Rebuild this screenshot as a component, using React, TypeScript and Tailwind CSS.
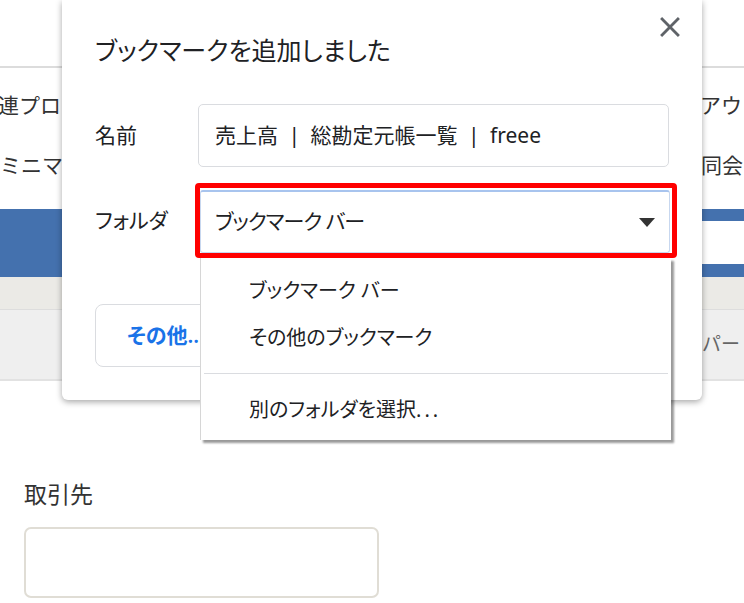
import { FC } from "react";

const CloseIcon: FC = () => (
  <svg width="34" height="34" viewBox="0 0 24 24" fill="#5f6368">
    <path d="M19 6.41L17.59 5 12 10.59 6.41 5 5 6.41 10.59 12 5 17.59 6.41 19 12 13.41 17.59 19 19 17.59 13.41 12z" />
  </svg>
);

const Caret: FC = () => (
  <svg width="16" height="9" viewBox="0 0 16 9">
    <path d="M0 0 L16 0 L8 9 Z" fill="#333333" />
  </svg>
);

const BackgroundPage: FC = () => (
  <div className="flex flex-col text-[#333] text-[21px]">
    <div className="h-[68px] border-b-2 border-[#dcdcdc]" />
    <div className="h-[76px] flex items-center">
      <div className="flex-1 whitespace-nowrap -ml-[23px]">関連プロジェクト</div>
      <div className="w-[44px] shrink-0 whitespace-nowrap -ml-[2px]">アウト</div>
    </div>
    <div className="h-[44px] flex items-center">
      <div className="flex-1 whitespace-nowrap">ミニマム</div>
      <div className="w-[64px] shrink-0 whitespace-nowrap">合同会</div>
    </div>
    <div className="h-[21px]" />
    <div className="h-[68px] bg-[#4471ae] flex items-start justify-end">
      <div className="mt-[12px] h-[43px] w-[120px] bg-white" />
    </div>
    <div className="h-[33px] bg-[#ebeae6] border-b border-[#dddddd]" />
    <div className="h-[71px] bg-[#efefef] border-b-2 border-[#e2e2e2] flex items-center justify-end">
      <div className="flex items-center gap-[6px] h-[34px] w-[42px] text-[19px] text-[#666] whitespace-nowrap">
        <span>パー</span>
        <span className="h-[30px] w-[6px] border-l-2 border-[#e7c89a] bg-[#fbf3e6]" />
      </div>
    </div>
    <div className="pl-[24px] pt-[100px]">
      <div className="text-[23px] leading-[26px] text-[#333]">取引先</div>
      <div className="mt-[20px] h-[71px] w-[355px] border-2 border-[#e0ddd5] rounded-[7px] bg-white" />
    </div>
  </div>
);

const FolderMenu: FC = () => (
  <div className="absolute left-[200px] top-[258px] w-[471px] h-[182px] bg-white border-l border-[#d6d6d6] shadow-[3px_3px_2px_rgba(0,0,0,0.4)] pt-[9px] text-[20px] text-[#202124] [font-feature-settings:'palt']">
    <div className="h-[47px] flex items-center pl-[48px]">ブックマーク バー</div>
    <div className="h-[47px] flex items-center pl-[48px]">その他のブックマーク</div>
    <div className="mt-[12px] mx-[3px] h-px bg-[#dadce0]" />
    <div className="mt-[12px] h-[47px] flex items-center pl-[48px]">
      別のフォルダを選択<span className="tracking-[3px]">...</span>
    </div>
  </div>
);

const BookmarkDialog: FC = () => (
  <div className="absolute left-[62px] top-0 w-[640px] h-[400px] bg-white rounded-b-[6px] shadow-[0_2px_6px_rgba(0,0,0,0.35)] pl-[33px] pr-[33px] text-[#202124] [font-feature-settings:'palt']">
    <button className="absolute right-[15px] top-[10px]">
      <CloseIcon />
    </button>
    <div className="pt-[34px] text-[25px] leading-[32px]">ブックマークを追加しました</div>
    <div className="mt-[38px] flex items-center">
      <div className="w-[103px] text-[21px]">名前</div>
      <div className="flex-1 h-[63px] border border-[#dadce0] rounded-[5px] flex items-center pl-[16px] text-[21px] [word-spacing:5px]">
        売上高 | 総勘定元帳一覧 | freee
      </div>
    </div>
    <div className="mt-[16px] flex items-center -mr-[8px]">
      <div className="w-[100px] text-[21px]">フォルダ</div>
      <div className="flex-1 border-[5px] border-[#ff0000] rounded-[4px] pt-[2px] pr-[2px]">
        <div className="h-[63px] border border-[#c7d7ef] border-t-2 border-t-[#a8c4ee] rounded-[3px] flex items-center justify-between pl-[14px] pr-[14px] text-[21px]">
          <span className="tracking-[-1px]">ブックマーク バー</span>
          <Caret />
        </div>
      </div>
    </div>
    <div className="mt-[46px] flex">
      <button className="h-[63px] w-[160px] border border-[#dadce0] rounded-[8px] text-left pl-[31px] text-[21px] font-semibold text-[#1a73e8]">
        その他...
      </button>
    </div>
  </div>
);

export default function App() {
  return (
    <div className="relative w-[744px] h-[603px] overflow-hidden bg-white font-['Noto_Sans','Noto_Sans_CJK_JP',sans-serif]">
      <BackgroundPage />
      <BookmarkDialog />
      <FolderMenu />
    </div>
  );
}
